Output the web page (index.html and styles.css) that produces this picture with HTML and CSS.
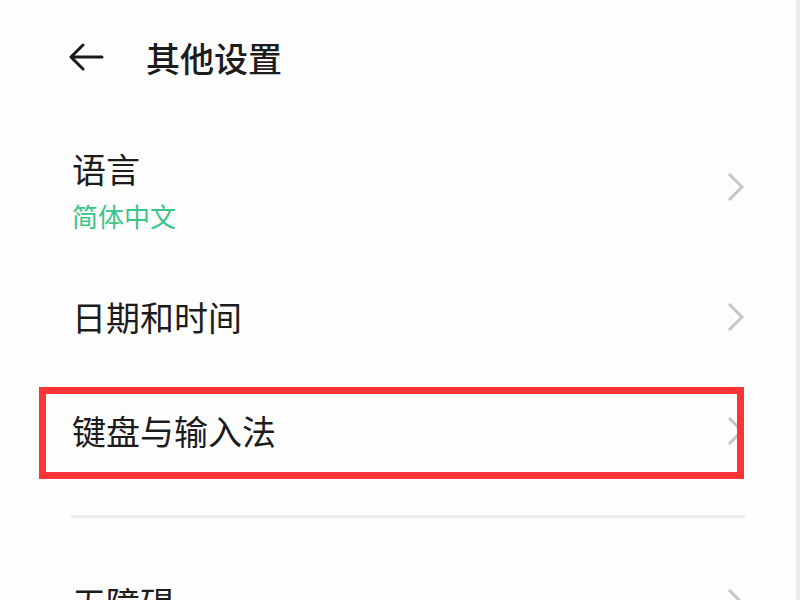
FILE: index.html
```html
<!DOCTYPE html>
<html lang="zh-CN">

<head>
    <meta charset="UTF-8">
    <meta name="viewport" content="width=device-width, initial-scale=1.0">
    <title>其他设置</title>
    <link rel="stylesheet" href="styles.css">
</head>

<body>
    <div class="screen">
        <header class="top-bar">
            <svg class="back-icon" width="36" height="28" viewBox="0 0 36 28">
                <path d="M34 14H3M15 2L3 14l12 12" fill="none" stroke="#1a1a1a" stroke-width="3" stroke-linecap="round" stroke-linejoin="round" />
            </svg>
            <h1>其他设置</h1>
        </header>

        <ul class="settings">
            <li class="row row-tall">
                <div class="row-text">
                    <span class="label">语言</span>
                    <span class="value">简体中文</span>
                </div>
                <svg class="chevron" width="18" height="30" viewBox="0 0 18 30">
                    <path d="M2 2l13 13L2 28" fill="none" stroke="#c6c6c6" stroke-width="3" />
                </svg>
            </li>
            <li class="row">
                <span class="label">日期和时间</span>
                <svg class="chevron" width="18" height="30" viewBox="0 0 18 30">
                    <path d="M2 2l13 13L2 28" fill="none" stroke="#c6c6c6" stroke-width="3" />
                </svg>
            </li>
            <li class="row highlighted">
                <span class="label">键盘与输入法</span>
                <svg class="chevron" width="18" height="30" viewBox="0 0 18 30">
                    <path d="M2 2l13 13L2 28" fill="none" stroke="#c6c6c6" stroke-width="3" />
                </svg>
            </li>
            <li class="divider"></li>
            <li class="row">
                <span class="label">无障碍</span>
                <svg class="chevron" width="18" height="30" viewBox="0 0 18 30">
                    <path d="M2 2l13 13L2 28" fill="none" stroke="#c6c6c6" stroke-width="3" />
                </svg>
            </li>
        </ul>
    </div>
</body>

</html>
```

FILE: styles.css
```css
body {
    margin: 0;
    padding: 0;
    background-color: #ececec;
    font-family: 'Noto Sans CJK SC', 'Noto Sans', sans-serif;
    color: #1c1c1c;
    overflow: hidden;
}

.screen {
    width: 796px;
    height: 600px;
    background-color: #fdfdfd;
    overflow: hidden;
}

.top-bar {
    display: flex;
    align-items: center;
    height: 114px;
    padding-left: 68px;
}

.back-icon {
    margin-right: 42px;
}

.top-bar h1 {
    margin: 0;
    font-size: 34px;
    font-weight: 500;
    letter-spacing: 0;
}

.settings {
    list-style: none;
    margin: 0;
    padding: 0;
}

.row {
    position: relative;
    display: flex;
    align-items: center;
    justify-content: space-between;
    height: 114px;
    padding: 0 51px 0 72px;
}

.row-tall {
    height: 146px;
}

.row-text {
    display: flex;
    flex-direction: column;
    padding-top: 6px;
}

.label {
    font-size: 34px;
    line-height: 46px;
}

.value {
    font-size: 26px;
    line-height: 36px;
    color: #3cc48a;
    margin-top: 6px;
}

.highlighted::after {
    content: "";
    position: absolute;
    top: 13px;
    bottom: 9px;
    left: 39px;
    right: 52px;
    border: 7px solid #fb3438;
}

.divider {
    height: 3px;
    margin: 27px 51px 28px 71px;
    background-color: #ececec;
}
```
